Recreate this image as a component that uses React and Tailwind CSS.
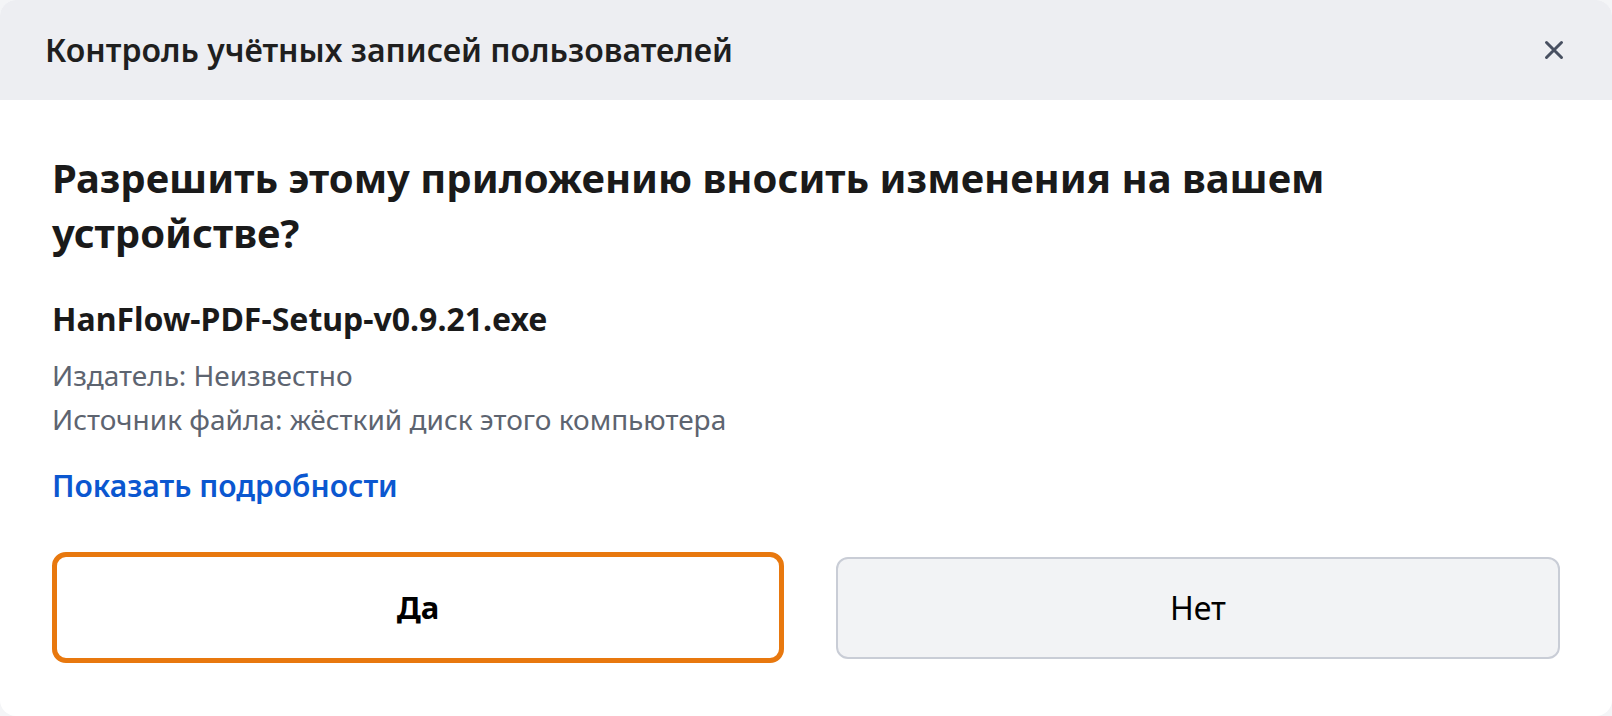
import React from "react";

export default function App() {
  return (
    <div
      className="w-[1612px] h-[716px] bg-[#f4f5f7] overflow-hidden"
      style={{ fontFamily: '"Noto Sans", "Open Sans", sans-serif' }}
    >
      <div className="w-full h-full bg-white rounded-[16px] overflow-hidden flex flex-col">
        <div className="h-[100px] bg-[#edeef2] flex items-center justify-between pl-[45px] pr-[46px] shrink-0">
          <div className="text-[32px] font-semibold text-[#1f1f1f] leading-none">
            Контроль учётных записей пользователей
          </div>
          <button className="w-[24px] h-[24px] flex items-center justify-center text-[#485061]">
            <svg width="20" height="20" viewBox="0 0 20 20" fill="none" stroke="currentColor" strokeWidth="3" strokeLinecap="round">
              <path d="M2.5 2.5 L17.5 17.5 M17.5 2.5 L2.5 17.5" />
            </svg>
          </button>
        </div>
        <div className="flex-1 px-[52px] pt-[50px] flex flex-col">
          <h1 className="text-[40px] font-bold leading-[55px] text-[#1a1a1a] max-w-[1400px]">
            Разрешить этому приложению вносить изменения на вашем устройстве?
          </h1>
          <div className="mt-[39px] text-[32px] font-bold leading-[40px] text-[#1a1a1a]">
            HanFlow-PDF-Setup-v0.9.21.exe
          </div>
          <div className="mt-[14px] text-[28px] leading-[44px] text-[#5d6470]">
            <div>Издатель: Неизвестно</div>
            <div>Источник файла: жёсткий диск этого компьютера</div>
          </div>
          <div className="mt-[25px] text-[30px] font-semibold leading-[40px] text-[#0b57d0]">
            Показать подробности
          </div>
          <div className="mt-[46px] flex items-center gap-[52px]">
            <button className="w-[732px] h-[111px] rounded-[14px] border-[5px] border-[#e8780e] bg-white text-[31px] font-bold text-black">
              Да
            </button>
            <button className="flex-1 h-[102px] rounded-[12px] border-2 border-[#c9cdd6] bg-[#f2f3f5] text-[32px] text-black">
              Нет
            </button>
          </div>
        </div>
      </div>
    </div>
  );
}
